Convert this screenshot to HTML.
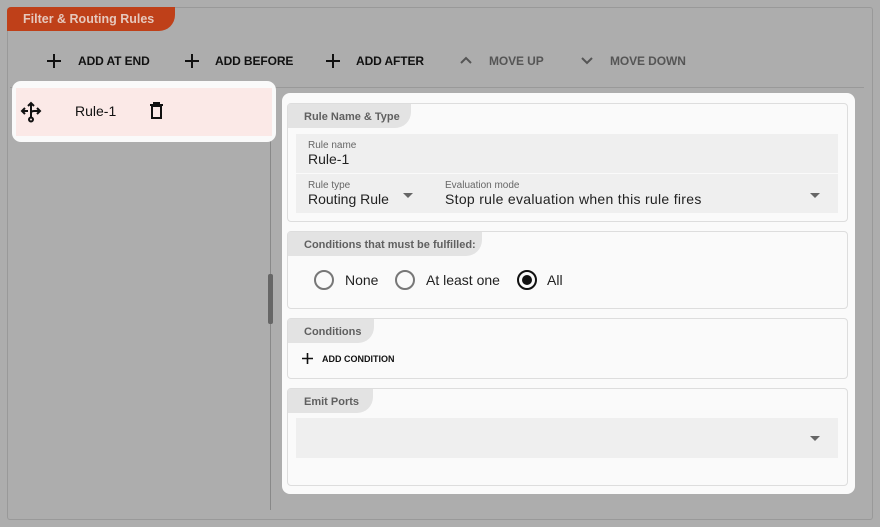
<!DOCTYPE html>
<html><head><meta charset="utf-8"><style>
*{box-sizing:border-box;margin:0;padding:0}
body{width:880px;height:527px;background:#adadad;font-family:"Liberation Sans",Roboto,sans-serif;position:relative;overflow:hidden}
.abs{position:absolute}
.outer{left:7px;top:7px;width:866px;height:513px;border:1px solid #999;border-radius:3px}
.tab{left:7px;top:7px;width:168px;height:24px;background:#bf4019;border-radius:4px 0 16px 0;color:#e6c8bd;font-weight:bold;font-size:12.5px;padding:5px 0 0 16px}
.btn{top:54px;font-size:12px;font-weight:bold;color:#111;letter-spacing:-0.1px}
.btn.dis{color:#555}
.hline{left:10px;top:87px;width:854px;height:1px;background:#999}
.vline{left:270px;top:88px;width:1px;height:422px;background:#888}
.handle{left:268px;top:274px;width:5px;height:50px;background:#666;border-radius:2px}
.sel{left:12px;top:81px;width:264px;height:61px;background:#fafafa;border-radius:9px}
.selin{left:16px;top:88px;width:256px;height:48px;background:#fbe9e7}
.card{left:282px;top:93px;width:573px;height:401px;background:#fafafa;border-radius:8px}
.sec{border:1px solid #ddd;border-radius:4px;background:#fafafa}
.stab{background:#e3e3e3;border-radius:0 0 16px 0;font-size:11px;font-weight:bold;color:#606060;padding:7px 0 0 16px;position:absolute;left:0;top:0;height:24px}
.field{background:#efefef;position:absolute}
.lab{font-size:10px;color:#666;position:absolute}
.val{font-size:14px;color:#222;position:absolute}
.caret{position:absolute;width:0;height:0;border-left:5px solid transparent;border-right:5px solid transparent;border-top:5px solid #666}
.radio{position:absolute;width:20px;height:20px;border:2px solid #777;border-radius:50%;top:270px}
</style></head><body>
<div class="abs outer"></div>
<div class="abs tab">Filter &amp; Routing Rules</div>

<svg class="abs" style="left:47px;top:54px" width="14" height="14"><path d="M7 0V14M0 7H14" stroke="#111" stroke-width="2"/></svg>
<div class="abs btn" style="left:78px">ADD AT END</div>
<svg class="abs" style="left:185px;top:54px" width="14" height="14"><path d="M7 0V14M0 7H14" stroke="#111" stroke-width="2"/></svg>
<div class="abs btn" style="left:215px">ADD BEFORE</div>
<svg class="abs" style="left:326px;top:54px" width="14" height="14"><path d="M7 0V14M0 7H14" stroke="#111" stroke-width="2"/></svg>
<div class="abs btn" style="left:356px">ADD AFTER</div>
<svg class="abs" style="left:460px;top:56px" width="12" height="8"><path d="M1 7L6 2L11 7" stroke="#555" stroke-width="2" fill="none"/></svg>
<div class="abs btn dis" style="left:489px">MOVE UP</div>
<svg class="abs" style="left:581px;top:57px" width="12" height="8"><path d="M1 1L6 6L11 1" stroke="#555" stroke-width="2" fill="none"/></svg>
<div class="abs btn dis" style="left:610px">MOVE DOWN</div>

<div class="abs hline"></div>
<div class="abs vline"></div>
<div class="abs handle"></div>
<div class="abs sel"></div>
<div class="abs selin"></div>
<svg class="abs" style="left:20px;top:100px" width="22" height="24" viewBox="0 0 22 24"><g stroke="#111" stroke-width="2" fill="none"><path d="M11 3V13M8 6L11 3L14 6"/><path d="M2 11H8M5 8L2 11L5 14"/><path d="M11 13Q11 11 14 11H20M17 8L20 11L17 14"/><path d="M11 13V17"/><circle cx="11" cy="19.5" r="2"/></g></svg>
<div class="abs" style="left:75px;top:103px;font-size:14px;color:#111">Rule-1</div>
<svg class="abs" style="left:150px;top:102px" width="13" height="17"><g stroke="#111" stroke-width="2" fill="none"><path d="M0 3H13M4 3V1H9V3"/><rect x="2" y="4" width="9" height="12"/></g></svg>

<div class="abs card"></div>
<div class="abs sec" style="left:287px;top:103px;width:561px;height:119px">
 <div class="stab" style="width:123px">Rule Name &amp; Type</div>
</div>
<div class="field" style="left:296px;top:134px;width:542px;height:39px"></div>
<div class="lab" style="left:308px;top:140px">Rule name</div>
<div class="val" style="left:308px;top:151px">Rule-1</div>
<div class="field" style="left:296px;top:174px;width:542px;height:39px"></div>
<div class="lab" style="left:308px;top:180px">Rule type</div>
<div class="val" style="left:308px;top:191px">Routing Rule</div>
<div class="caret" style="left:403px;top:193px"></div>
<div class="lab" style="left:445px;top:180px">Evaluation mode</div>
<div class="val" style="left:445px;top:191px;letter-spacing:0.3px">Stop rule evaluation when this rule fires</div>
<div class="caret" style="left:810px;top:193px"></div>
<div class="abs sec" style="left:287px;top:231px;width:561px;height:78px">
 <div class="stab" style="width:194px">Conditions that must be fulfilled:</div>
</div>
<div class="radio" style="left:314px"></div>
<div class="abs val" style="left:345px;top:272px">None</div>
<div class="radio" style="left:395px"></div>
<div class="abs val" style="left:426px;top:272px">At least one</div>
<div class="radio" style="left:517px;border-color:#111"><div style="width:10px;height:10px;background:#111;border-radius:50%;margin:3px"></div></div>
<div class="abs val" style="left:547px;top:272px">All</div>
<div class="abs sec" style="left:287px;top:318px;width:561px;height:61px">
 <div class="stab" style="width:86px">Conditions</div>
</div>
<svg class="abs" style="left:302px;top:353px" width="11" height="11"><path d="M5.5 0V11M0 5.5H11" stroke="#111" stroke-width="1.6"/></svg>
<div class="abs" style="left:322px;top:354px;font-size:9px;font-weight:bold;color:#111">ADD CONDITION</div>
<div class="abs sec" style="left:287px;top:388px;width:561px;height:98px">
 <div class="stab" style="width:85px">Emit Ports</div>
</div>
<div class="field" style="left:296px;top:418px;width:542px;height:40px"></div>
<div class="caret" style="left:810px;top:436px"></div>
</body></html>
